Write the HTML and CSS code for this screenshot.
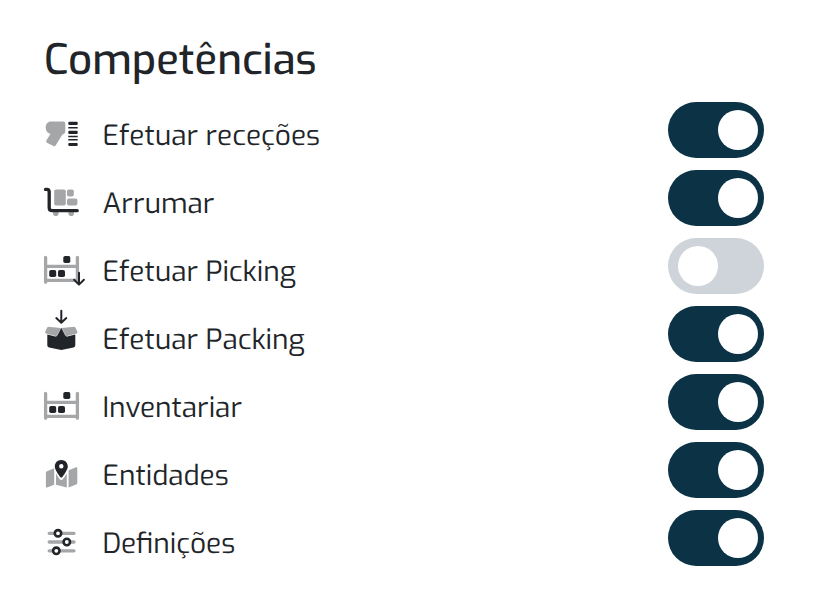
FILE: index.html
```html
<!DOCTYPE html>
<html lang="pt">
  <head>
    <meta charset="UTF-8" />
    <meta name="viewport" content="width=device-width, initial-scale=1.0" />
    <title>Competências</title>
    <link rel="stylesheet" href="styles.css">
  </head>
  <body>
    <main class="skills">
      <h1 class="title">Competências</h1>

      <label class="row">
        <svg class="icon" viewBox="0 0 48 56">
          <path class="gray" d="M11 19.5H23.2Q25.3 19.5 25.3 21.6V29Q25.3 32 22.6 32.2L15.8 43.2Q15 44.6 13.5 43.9L6.9 40.7Q5.6 40 6.4 38.5L10.5 31.7C7.5 31.3 5.7 28.7 5.7 25.5C5.7 22 7.8 19.5 11 19.5Z" />
          <path class="dark" d="M29.3 19.7h7.4q1 0 1 1v1.3q0 1-1 1h-7.4q-1 0-1-1v-1.3q0-1 1-1zM28.3 25h9.4v1.5h-9.4zM29.3 28.7h7.4q1 0 1 1v1.2q0 1-1 1h-7.4q-1 0-1-1v-1.2q0-1 1-1zM28.3 33.7h9.4v1.5h-9.4zM28.3 37h9.4v1.5h-9.4zM29.3 41h7.4q1 0 1 1v1.1q0 1-1 1h-7.4q-1 0-1-1v-1.1q0-1 1-1z" />
        </svg>
        <span class="name">Efetuar receções</span>
        <input class="switch" type="checkbox" checked />
      </label>

      <label class="row">
        <svg class="icon" viewBox="0 0 48 56">
          <g class="gray">
            <rect x="14.2" y="19.4" width="11.6" height="16.1" rx="1.8" />
            <rect x="27" y="19.4" width="6.8" height="7.2" rx="1.8" />
            <rect x="27" y="28.4" width="10.4" height="7.1" rx="1.8" />
            <circle cx="15.8" cy="43.2" r="2.8" />
            <circle cx="31.2" cy="43.2" r="2.8" />
          </g>
          <path class="line cart" d="M5.5 19.4H6.8Q9.2 19.4 9.2 22V37.5Q9.2 40.7 12.2 40.7H37.2" />
        </svg>
        <span class="name">Arrumar</span>
        <input class="switch" type="checkbox" checked />
      </label>

      <label class="row">
        <svg class="icon" viewBox="0 0 48 56">
          <path class="rack" d="M5.6 19.5V44.2M37.4 19.5V44.2M5.6 28.4H37.4M5.6 42.3H37.4" />
          <g class="dark">
            <rect x="23.3" y="18" width="7" height="7" rx="1.8" />
            <rect x="9.2" y="32" width="7" height="7" rx="1.8" />
            <rect x="18" y="32" width="7" height="7" rx="1.8" />
          </g>
          <path class="line arrow" d="M39 34.8V46.2M34.1 41.8L39 46.6L43.9 41.8" />
        </svg>
        <span class="name">Efetuar Picking</span>
        <input class="switch" type="checkbox" />
      </label>

      <label class="row">
        <svg class="icon" viewBox="0 0 48 56">
          <path class="line arrow" d="M21.3 4.8V16.2M16.3 12.1L21.3 16.7L26.3 12.1" />
          <path class="gray" d="M8.2 20.8L20.8 22L17 29.5Q16.5 30.4 15.4 30.1L6 27.4Q4.7 27 5.2 25.7L7.2 21.4ZM34.4 20.8L21.8 22L25.6 29.5Q26.1 30.4 27.2 30.1L36.6 27.4Q37.9 27 37.4 25.7L35.4 21.4Z" />
          <path class="dark" d="M21.3 21.7L25 28.9Q26 31 28.3 30.3L35.3 28.5V39.2Q35.3 41.1 33.5 41.6L21.3 44L9.1 41.6Q7.3 41.1 7.3 39.2V28.5L14.3 30.3Q16.6 31 17.6 28.9Z" />
        </svg>
        <span class="name">Efetuar Packing</span>
        <input class="switch" type="checkbox" checked />
      </label>

      <label class="row">
        <svg class="icon" viewBox="0 0 48 56">
          <path class="rack" d="M5.6 19.5V44.2M37.4 19.5V44.2M5.6 28.4H37.4M5.6 42.3H37.4" />
          <g class="dark">
            <rect x="23.3" y="18" width="7" height="7" rx="1.8" />
            <rect x="9.2" y="32" width="7" height="7" rx="1.8" />
            <rect x="18" y="32" width="7" height="7" rx="1.8" />
          </g>
        </svg>
        <span class="name">Inventariar</span>
        <input class="switch" type="checkbox" checked />
      </label>

      <label class="row">
        <svg class="icon" viewBox="0 0 48 56">
          <path class="gray" d="M7 29.2L14.2 26.3V42.7L7.1 45.5Q5.9 45.9 5.9 44.7V30.8Q5.9 29.6 7 29.2ZM16 31.5Q18 35.2 20 37.4Q21.3 38.7 22.6 37.4Q24.7 35.2 26.8 31.5V45.6L16 42.7ZM28.6 28.3L36.2 25.2Q37.3 24.9 37.3 26V40.7Q37.3 42 36.2 42.4L28.6 45.4Z" />
          <path class="dark" fill-rule="evenodd" d="M21.3 18C17.5 18 14.8 20.8 14.8 24.4C14.8 27.3 18 32 20.2 34.9Q21.3 36.3 22.4 34.9C24.6 32 27.8 27.3 27.8 24.4C27.8 20.8 25.1 18 21.3 18ZM21.3 22.1a2.2 2.2 0 1 1 0 4.4a2.2 2.2 0 1 1 0-4.4Z" />
        </svg>
        <span class="name">Entidades</span>
        <input class="switch" type="checkbox" checked />
      </label>

      <label class="row">
        <svg class="icon" viewBox="0 0 48 56">
          <path class="rack" d="M9.2 23.3H34M9.2 32H34M9.2 40.8H34" />
          <g class="knobs">
            <circle cx="18" cy="23.3" r="3.2" />
            <circle cx="26.8" cy="32" r="3.2" />
            <circle cx="16.3" cy="40.8" r="3.2" />
          </g>
        </svg>
        <span class="name">Definições</span>
        <input class="switch" type="checkbox" checked />
      </label>
    </main>
  </body>
</html>
```
FILE: styles.css
```css
body {
  margin: 0;
  background-color: #fff;
  color: #212529;
  font-family: "Exo", "Roboto", sans-serif;
  text-rendering: geometricPrecision;
}
.skills {
  width: 724px;
  padding: 32px 60px 0 40px;
}
.title {
  height: 64px;
  margin: 0;
  padding-left: 4px;
  font-size: 42px;
  font-weight: 500;
  line-height: 56px;
  box-sizing: border-box;
}
.row {
  height: 68px;
  display: flex;
  align-items: center;
  cursor: pointer;
}
.icon {
  width: 48px;
  height: 56px;
  flex-shrink: 0;
}
.name {
  flex: 1;
  padding: 14px 0 0 14.5px;
  font-size: 28px;
  line-height: 40px;
}

/* icons */
.gray {
  fill: #a5a6a8;
}
.dark {
  fill: #212529;
}
.line {
  fill: none;
  stroke: #212529;
  stroke-linecap: round;
  stroke-linejoin: round;
}
.cart {
  stroke-width: 3.3;
}
.arrow {
  stroke-width: 2;
}
.rack {
  fill: none;
  stroke: #a5a6a8;
  stroke-width: 3.3;
  stroke-linecap: round;
}
.knobs {
  fill: #fff;
  stroke: #212529;
  stroke-width: 2.6;
}

/* toggle */
.switch {
  appearance: none;
  width: 96px;
  height: 56px;
  margin: 0;
  padding: 8px 10px;
  display: flex;
  box-sizing: border-box;
  border-radius: 28px;
  background-color: #ced4da;
  cursor: pointer;
}
.switch::before {
  content: "";
  width: 40px;
  height: 40px;
  border-radius: 50%;
  background-color: #fff;
}
.switch:checked {
  padding-right: 6px;
  justify-content: flex-end;
  background-color: #0b3245;
}
```
